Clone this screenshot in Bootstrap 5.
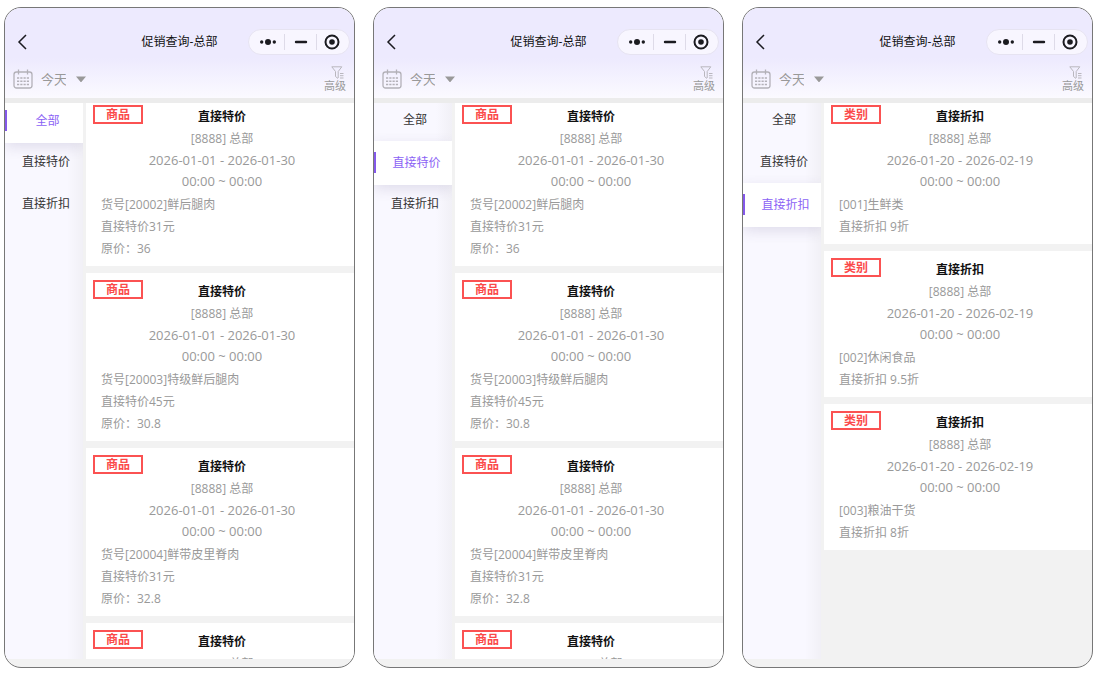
<!DOCTYPE html>
<html lang="zh-CN">
<head>
<meta charset="utf-8">
<meta name="viewport" content="width=device-width, initial-scale=1">
<title>促销查询-总部</title>
<link href="https://cdn.jsdelivr.net/npm/bootstrap@5.3.0/dist/css/bootstrap.min.css" rel="stylesheet">
<style>
  body { font-family: "Open Sans", "Noto Sans CJK SC", sans-serif; font-size: 12px; line-height: 22px; color: #999; background: #fff; }
  .page { padding: 7px 3px 4px 4px; overflow: hidden; }
  .phones { --bs-gutter-x: 18px; --bs-gutter-y: 18px; }
  .phone { height: calc(100vh - 12px); min-height: 480px; border: 1px solid #777; border-radius: 17px; background: #f2f2f2; padding-bottom: 8px; }
  .phone-head { background: linear-gradient(#edeafe 0, #edeafe 50px, #fbfaff 90px); padding-top: 21px; }
  .title-row { display: grid; grid-template-columns: 1fr auto 1fr; height: 26px; padding: 0 4px 0 11px; }
  .title-row h1 { font-size: 12px; line-height: 24px; font-weight: 400; color: #111; padding-right: 7px; }
  .icon-btn { border: 0; background: none; padding: 0; color: #1b1b20; line-height: 0; }
  .capsule { display: grid; grid-template-columns: 35px 32px 33px; width: 102px; height: 26px; border: 1px solid #e6e3f1; border-radius: 13px; background: #f8f6ff; }
  .capsule .icon-btn { height: 16px; }
  .capsule .icon-btn:first-child { padding-left: 2px; }
  .capsule .icon-btn:last-child { padding-right: 3px; }
  .capsule .icon-btn + .icon-btn { border-left: 1px solid #dedbe8; }
  .tool-row { height: 43px; padding: 5px 8px 0 8px; }
  .day-select { appearance: none; border: 0; background: none; color: #999; font-size: 13px; line-height: 20px; padding: 0 20px 0 0; width: 45px; }
  .day-picker svg.caret { right: 0; pointer-events: none; }
  .adv-btn { border: 0; background: none; padding: 0; color: #999; font-size: 11px; line-height: 14px; }
  .strip { top: 0; height: 5px; background: #ececec; z-index: 3; }
  .side { width: 78px; padding-top: 1px; background: linear-gradient(90deg, #f9f8ff 62px, #f1f0f6 78px); flex: none; }
  .side button { border: 0; background: none; height: 42px; padding: 0 0 0 4px; width: 100%; color: #333; font-size: 12px; flex: none; }
  .side button.on { position: relative; height: 44px; margin-bottom: -2px; padding-left: 7px; background: #fff; color: #8b62f5; box-shadow: 0 4px 14px rgba(70, 60, 110, .14); clip-path: inset(-16px 0 -16px 0); }
  .side button.on::before { content: ""; position: absolute; left: 0; top: 11px; width: 2px; height: 21px; background: #8459ea; }
  .promo-list { margin-left: 3px; gap: 7px; min-width: 0; }
  .promo { background: #fff; padding: 8px 11px 6px 15px; flex: none; }
  .promo h2 { font-size: 12px; line-height: 22px; font-weight: 700; color: #111; }
  .promo .dates, .promo .hours { font-size: 13px; }
  .promo .dates { line-height: 20px; }
  .promo .hours { margin-bottom: 2px; }
  .tag { left: 7px; top: 7px; width: 50px; height: 19px; border: 2px solid #fb5252; color: #fb4a4a; font-weight: 600; line-height: 15px; }
</style>
</head>
<body>
<main class="page">
  <div class="row row-cols-1 row-cols-md-3 phones" id="phones"></div>
</main>

<template id="phone-tpl">
  <div class="col">
    <section class="phone d-flex flex-column overflow-hidden">
      <header class="phone-head">
        <div class="title-row align-items-center">
          <button class="icon-btn text-start" type="button" aria-label="返回">
            <svg width="14" height="18" viewBox="0 0 14 18" fill="none" stroke="currentColor" stroke-width="1.5"><path d="M10 2 3 9l7 7"/></svg>
          </button>
          <h1 class="m-0">促销查询-总部</h1>
          <div class="capsule align-items-center ms-auto">
            <button class="icon-btn" type="button" aria-label="更多">
              <svg width="18" height="12" viewBox="0 0 18 12" fill="currentColor"><circle cx="2.700" cy="6" r="1.700"/><circle cx="9" cy="6" r="3"/><circle cx="15.300" cy="6" r="1.700"/></svg>
            </button>
            <button class="icon-btn" type="button" aria-label="最小化">
              <svg width="14" height="12" viewBox="0 0 14 12" stroke="currentColor" stroke-width="2.400" stroke-linecap="round"><path d="M2 6h10"/></svg>
            </button>
            <button class="icon-btn" type="button" aria-label="关闭">
              <svg width="16" height="16" viewBox="0 0 16 16"><circle cx="8" cy="8" r="6.500" fill="none" stroke="currentColor" stroke-width="2"/><circle cx="8" cy="8" r="2.800" fill="currentColor"/></svg>
            </button>
          </div>
        </div>
        <div class="tool-row d-flex align-items-center justify-content-between">
          <div class="d-flex align-items-center">
            <svg class="me-2" width="20" height="20" viewBox="0 0 20 20" fill="none" stroke="#b3b1b8" stroke-width="1.300"><rect x="1" y="3" width="18" height="16" rx="2.500"/><path d="M5.500 0.500v5M14.500 0.500v5"/><path d="M4 9h12M4 12.200h12M4 15.400h12" stroke-width="1.500" stroke-dasharray="2.200 1.070"/></svg>
            <div class="day-picker position-relative d-flex align-items-center">
              <select class="day-select" aria-label="日期"><option>今天</option><option>昨天</option></select>
              <svg class="caret position-absolute" width="10" height="6" viewBox="0 0 10 6" fill="#999"><path d="M0 .5h10L5.800 5.400a1 1 0 0 1-1.600 0z"/></svg>
            </div>
          </div>
          <button class="adv-btn d-flex flex-column align-items-center" type="button">
            <svg class="ms-1" width="13" height="13" viewBox="0 0 13 13" fill="none" stroke="#b9b7be"><path d="M7 12.500 4.500 10.500V5.500L.8.800h10L7.200 5.500V12M9 7.500h3.500M9 9.700h3.500M9 12h3.500"/></svg>
            高级
          </button>
        </div>
      </header>
      <div class="position-relative d-flex flex-fill overflow-hidden">
        <div class="strip position-absolute w-100"></div>
        <nav class="side d-flex flex-column overflow-hidden" aria-label="促销类型"></nav>
        <div class="promo-list d-flex flex-column flex-fill overflow-hidden"></div>
      </div>
    </section>
  </div>
</template>

<script src="https://cdn.jsdelivr.net/npm/bootstrap@5.3.0/dist/js/bootstrap.bundle.min.js"></script>
<script>
  const tabs = ['全部', '直接特价', '直接折扣'];
  const special = (code, name, price, original) => ({
    tag: '商品', title: '直接特价', dates: '2026-01-01 - 2026-01-30', hours: '00:00 ~ 00:00',
    lines: [`货号[${code}]${name}`, `直接特价${price}元`, `原价：${original}`]
  });
  const discount = (code, name, rate) => ({
    tag: '类别', title: '直接折扣', dates: '2026-01-20 - 2026-02-19', hours: '00:00 ~ 00:00',
    lines: [`[${code}]${name}`, `直接折扣 ${rate}折`]
  });
  const specials = [
    special('20002', '鲜后腿肉', 31, 36),
    special('20003', '特级鲜后腿肉', 45, 30.8),
    special('20004', '鲜带皮里脊肉', 31, 32.8),
    { tag: '商品', title: '直接特价', lines: [] }
  ];
  const discounts = [discount('001', '生鲜类', 9), discount('002', '休闲食品', 9.5), discount('003', '粮油干货', 8)];
  const screens = [specials, specials, discounts];

  screens.forEach((items, active) => {
    const phone = document.getElementById('phone-tpl').content.cloneNode(true);
    phone.querySelector('.side').innerHTML = tabs.map((t, i) =>
      `<button type="button"${i === active ? ' class="on" aria-current="true"' : ''}>${t}</button>`).join('');
    phone.querySelector('.promo-list').innerHTML = items.map(p => `
      <article class="promo position-relative">
        <span class="tag position-absolute text-center">${p.tag}</span>
        <div class="text-center">
          <h2 class="m-0">${p.title}</h2>
          <div>[8888] 总部</div>
          ${p.dates ? `<div class="dates">${p.dates}</div><div class="hours">${p.hours}</div>` : ''}
        </div>
        ${p.lines.map(l => `<div>${l}</div>`).join('')}
      </article>`).join('');
    document.getElementById('phones').append(phone);
  });
</script>
</body>
</html>
